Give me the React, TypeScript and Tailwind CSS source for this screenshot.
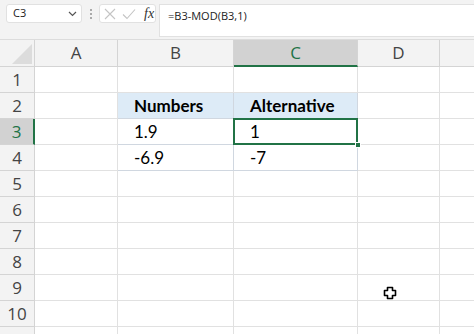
import React from "react";

const COLS = [
  { key: "A", w: "w-[83px]", label: "A" },
  { key: "B", w: "w-[116px]", label: "B" },
  { key: "C", w: "w-[124px]", label: "C" },
  { key: "D", w: "w-[82px]", label: "D" },
  { key: "E", w: "w-[90px]", label: "" },
];

type Cell = { text: string; bold?: boolean; head?: boolean };

const DATA: Record<number, Record<string, Cell>> = {
  2: {
    B: { text: "Numbers", bold: true, head: true },
    C: { text: "Alternative", bold: true, head: true },
  },
  3: { B: { text: "1.9" }, C: { text: "1" } },
  4: { B: { text: "-6.9" }, C: { text: "-7" } },
};

const ROWS = [1, 2, 3, 4, 5, 6, 7, 8, 9, 10, 11];

function CrossCursor() {
  return (
    <svg
      className="absolute left-[383px] top-[286px]"
      width="15"
      height="15"
      viewBox="0 0 15 15"
    >
      <path
        d="M4.5 1.5h5v3h3v5h-3v3h-5v-3h-3v-5h3z"
        fill="#fff"
        stroke="#000"
        strokeWidth="1.6"
        strokeLinejoin="round"
      />
    </svg>
  );
}

export default function App() {
  return (
    <div
      className="relative h-[334px] w-[474px] overflow-hidden bg-white"
      style={{ fontFamily: "'Open Sans', 'Noto Sans', sans-serif" }}
    >
      {/* formula bar */}
      <div className="flex h-[39px] items-start bg-[#f3f3f3] pt-[4px]">
        <div className="ml-[6px] flex h-[19px] w-[76px] shrink-0 items-center justify-between rounded-[3px] border border-[#e1e1e1] bg-white pl-[6px] pr-[4px] text-[11px] text-[#222]">
          <span>C3</span>
          <svg width="9" height="6" viewBox="0 0 9 6">
            <path d="M1 1l3.5 3.5L8 1" fill="none" stroke="#555" strokeWidth="1.2" />
          </svg>
        </div>
        <div className="flex h-[19px] w-[17px] shrink-0 flex-col items-center justify-center gap-[2px]">
          <span className="h-[2px] w-[2px] bg-[#aaa]" />
          <span className="h-[2px] w-[2px] bg-[#aaa]" />
          <span className="h-[2px] w-[2px] bg-[#aaa]" />
        </div>
        <div className="flex h-[19px] w-[57px] shrink-0 items-center gap-[6px] rounded-[3px] border border-[#e1e1e1] bg-white pl-[4px]">
          <svg width="12" height="12" viewBox="0 0 12 12">
            <path d="M1 1l10 10M11 1L1 11" stroke="#c4c4c4" strokeWidth="1.1" />
          </svg>
          <svg width="14" height="12" viewBox="0 0 14 12">
            <path d="M1 6.5l4 4L13 1.5" fill="none" stroke="#c4c4c4" strokeWidth="1.1" />
          </svg>
          <span
            className="ml-[2px] text-[14px] italic text-[#333]"
            style={{ fontFamily: "'Liberation Serif', serif" }}
          >
            fx
          </span>
        </div>
        <div className="ml-[3px] h-[33px] flex-1 border border-r-0 border-[#e1e1e1] bg-white pl-[8px] pt-[3px] text-[11px] text-[#222]">
          =B3-MOD(B3,1)
        </div>
      </div>

      {/* column headers */}
      <div className="flex h-[28px] border-t border-[#dcdcdc] bg-[#f3f3f3]">
        <div className="relative w-[35px] shrink-0 border-b border-r border-[#d4d4d4]">
          <svg className="absolute bottom-[2px] right-[2px]" width="20" height="20" viewBox="0 0 20 20">
            <path d="M20 0V20H0z" fill="#dcdcdc" />
          </svg>
        </div>
        {COLS.map((c) => (
          <div
            key={c.key}
            className={`${c.w} flex shrink-0 items-center justify-center text-[17px] ${
              c.key === "C"
                ? "border-b-2 border-r border-b-[#217346] border-r-[#d4d4d4] bg-[#d2d2d2] text-[#217346]"
                : "border-b border-r border-[#d4d4d4] text-[#444]"
            }`}
          >
            {c.label}
          </div>
        ))}
      </div>

      {/* rows */}
      {ROWS.map((r) => (
        <div key={r} className="flex h-[26px]">
          <div
            className={`flex w-[35px] shrink-0 items-center justify-center border-b border-[#d4d4d4] text-[17px] ${
              r === 3
                ? "border-r-2 border-r-[#217346] bg-[#d2d2d2] text-[#217346]"
                : "border-r border-r-[#d4d4d4] bg-[#f3f3f3] text-[#444]"
            }`}
          >
            {r < 11 ? r : ""}
          </div>
          {COLS.map((c) => {
            const cell = DATA[r]?.[c.key];
            const selected = r === 3 && c.key === "C";
            return (
              <div
                key={c.key}
                className={`${c.w} relative flex shrink-0 items-center border-b border-r pl-[16px] text-[17px] text-black ${
                  cell ? "border-[#d0d7e0]" : "border-[#e1e1e1]"
                } ${cell?.head ? "bg-[#ddebf7]" : ""} ${cell?.bold ? "font-bold" : ""}`}
                style={{ fontFamily: "Lato, 'Open Sans', sans-serif" }}
              >
                {cell?.text}
                {selected && (
                  <>
                    <div className="absolute -left-[1px] -top-[1px] bottom-[-1px] right-[-1px] border-2 border-[#217346]" />
                    <div className="absolute -bottom-[4px] -right-[4px] z-10 h-[6px] w-[6px] border border-white bg-[#217346]" />
                  </>
                )}
              </div>
            );
          })}
        </div>
      ))}

      <CrossCursor />
    </div>
  );
}
